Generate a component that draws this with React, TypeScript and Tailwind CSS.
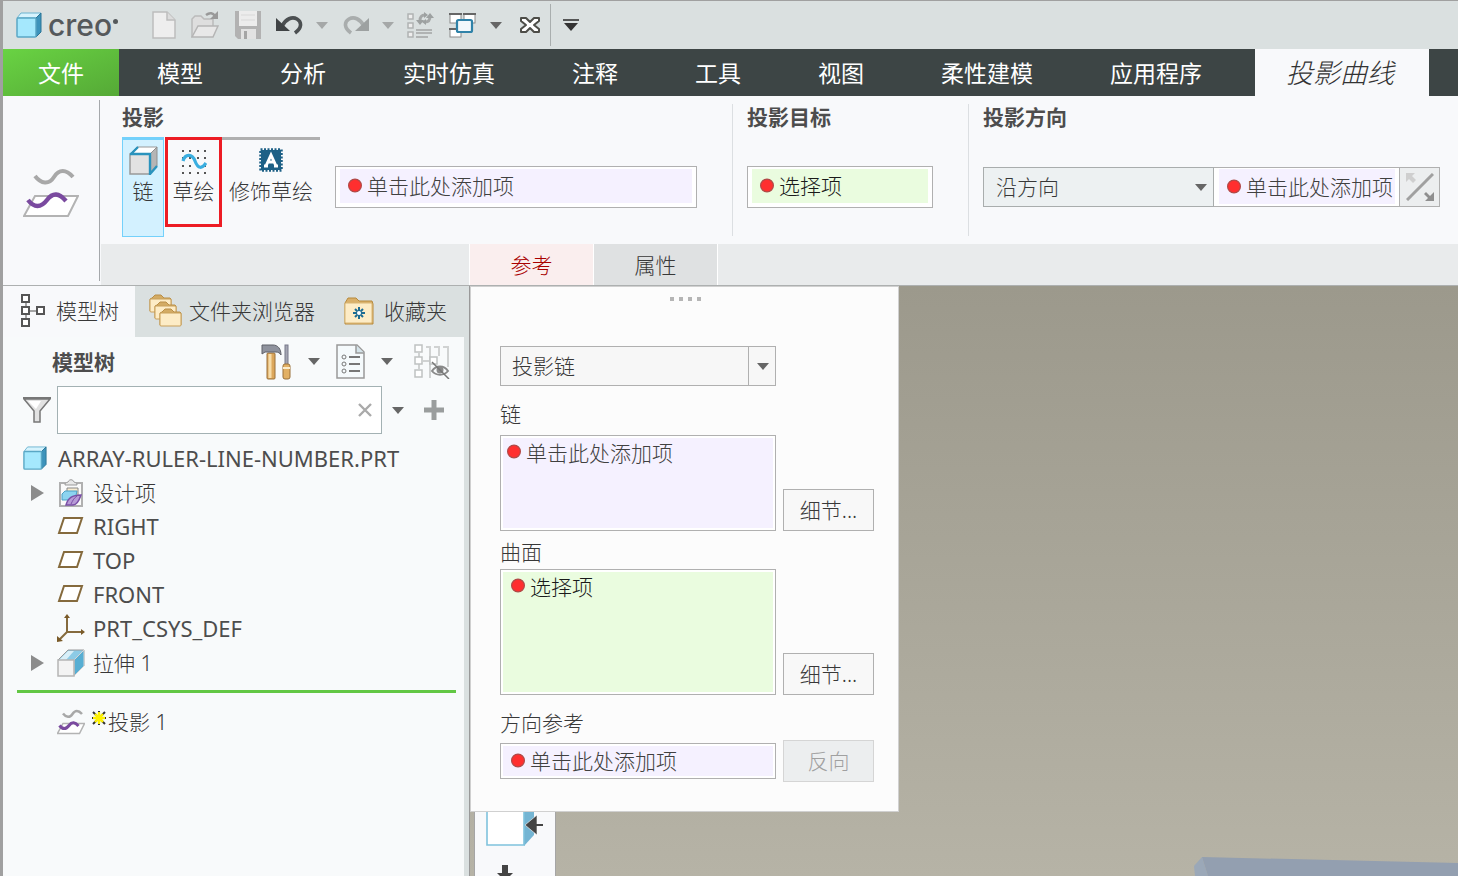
import { useState, type ReactNode } from 'react'
import { clsx } from 'clsx'

/* ---------- icons ---------- */

function Caret({ className = 'text-[#666]' }: { className?: string }) {
  return (
    <svg width="12" height="7" viewBox="0 0 12 7" className={clsx('shrink-0', className)}>
      <path d="M0 0h12L6 7z" fill="currentColor" />
    </svg>
  )
}

function RedDot() {
  return (
    <svg width="14" height="16" viewBox="0 0 14 16" className="shrink-0">
      <circle cx="7" cy="7.5" r="6.4" fill="#ff2f2f" stroke="#b04a48" strokeWidth="1.2" />
    </svg>
  )
}

function PartCube({ size }: { size: number }) {
  return (
    <svg width={size} height={size} viewBox="0 0 26 26" className="shrink-0">
      <path d="M1 6 5 1h20l-5 5z" fill="#d6f3fd" stroke="#6db4d0" />
      <path d="M20 6l5-5v19l-5 5z" fill="#3d93bb" stroke="#2a7596" />
      <rect x="1" y="6" width="19" height="19" rx="1" fill="#a5e8fd" stroke="#5aa7c5" strokeWidth="1.5" />
    </svg>
  )
}

function NewIcon() {
  return (
    <svg width="24" height="28" viewBox="0 0 24 28">
      <path d="M1 1h14l8 8v18H1z" fill="#eee" stroke="#bdbdbd" strokeWidth="1.5" />
      <path d="M15 1v8h8" fill="#dcdcdc" stroke="#bdbdbd" strokeWidth="1.5" />
    </svg>
  )
}

function OpenIcon() {
  return (
    <svg width="28" height="28" viewBox="0 0 28 28">
      <path d="M1 26V8l3-3h6l3 3h9v7" fill="#dedede" stroke="#bbb" strokeWidth="1.5" />
      <path d="M1 26l6-11h20l-5 11z" fill="#e8e8e8" stroke="#b5b5b5" strokeWidth="1.5" />
      <path d="M15 4c4-3 7-2 9 1" fill="none" stroke="#999" strokeWidth="2.5" />
      <path d="M27 0v8h-8z" fill="#999" />
    </svg>
  )
}

function SaveIcon() {
  return (
    <svg width="26" height="28" viewBox="0 0 26 28">
      <path d="M0 0h26v28H3l-3-3z" fill="#b2b2b2" />
      <rect x="4" y="0" width="18" height="15" fill="#ececec" />
      <path d="M6 18h15v10H6z" fill="#e2e2e2" />
      <rect x="9" y="20" width="3" height="8" fill="#a5a5a5" />
      <path d="M6 4h14M6 9h14" stroke="#d8d8d8" />
    </svg>
  )
}

function UndoIcon() {
  return (
    <svg width="28" height="20" viewBox="0 0 28 20">
      <path d="M6 11C10 4 16 1 21 4c5 3 5 9-2 14" fill="none" stroke="#4b4f51" strokeWidth="3.6" />
      <path d="M0 3l14 13H0z" fill="#3f4345" />
    </svg>
  )
}

function RedoIcon() {
  return (
    <svg width="28" height="20" viewBox="0 0 28 20">
      <path d="M22 11C18 4 12 1 7 4c-5 3-5 9 2 14" fill="none" stroke="#a9adad" strokeWidth="3.6" />
      <path d="M27 3v13H13z" fill="#9da1a1" />
    </svg>
  )
}

function RegenIcon() {
  return (
    <svg width="27" height="27" viewBox="0 0 27 27" fill="none" stroke="#b0b3b3">
      <rect x="1" y="2" width="5" height="5" strokeWidth="1.5" fill="#eee" />
      <rect x="1" y="11" width="5" height="5" strokeWidth="1.5" fill="#eee" />
      <rect x="1" y="20" width="5" height="5" strokeWidth="1.5" fill="#eee" />
      <path d="M9 18h16M9 21h16M9 25h12" strokeWidth="1.8" />
      <path d="M13 9c0-4 1-6 5-6M23 4c0 4-1 6-5 6" strokeWidth="3" stroke="#a4a7a7" />
      <path d="M9 8h8l-4 5zM19 6h8l-4-5zM17 0v6l4-3zM19 7v6l-4-3z" fill="#9da1a1" stroke="none" />
    </svg>
  )
}

function WindowsIcon() {
  return (
    <svg width="27" height="27" viewBox="0 0 27 27">
      <g fill="#fff" stroke="#8a8a8a">
        <rect x="1" y="2" width="11" height="9" />
        <rect x="15" y="2" width="11" height="9" />
        <rect x="1" y="17" width="11" height="8" />
      </g>
      <path d="M0 2h13M14 2h13M0 17h8" stroke="#666" strokeWidth="2" />
      <rect x="8" y="8" width="15" height="12" rx="1.5" fill="#f2f8fb" stroke="#2f82a8" strokeWidth="2.2" />
    </svg>
  )
}

function CloseWindowIcon() {
  return (
    <svg width="20" height="18" viewBox="0 0 20 18" strokeLinejoin="round">
      <path d="M1 2h5l4 4 4-4h5v3l-5 4 5 4v3h-5l-4-4-4 4H1v-3l5-4-5-4z" fill="#fff" stroke="#4d4d48" strokeWidth="2" />
    </svg>
  )
}

function CustomizeIcon() {
  return (
    <svg width="16" height="12" viewBox="0 0 16 12">
      <path d="M0 1h16" stroke="#333" strokeWidth="1.6" />
      <path d="M1 4h14l-7 8z" fill="#333" />
    </svg>
  )
}

function ProjectIcon({ className, small }: { className: string; small?: boolean }) {
  return (
    <svg viewBox="0 0 56 50" className={clsx('shrink-0', className)} fill="none">
      <path d="M12 28h43L45 48H1z" fill="#fff" stroke="#b3b3b3" strokeWidth={small ? 3 : 2} />
      <path d="M12 8c6 8 14 9 19 1s12-8 19 0" stroke="#a8a8a8" strokeWidth={small ? 5 : 4} />
      <path d="M5 32c6 8 13 8 19 0s12-7 19 1" stroke="#7a4a9f" strokeWidth={small ? 6 : 4.4} />
    </svg>
  )
}

function ChainIcon() {
  return (
    <svg width="29" height="29" viewBox="0 0 29 29">
      <path d="M1 8l7-7h20l-6 7z" fill="#fff" stroke="#999" />
      <path d="M21 8l7-7v19l-7 8z" fill="#b5b5b5" stroke="#8f8f8f" />
      <rect x="1" y="8" width="20" height="20" fill="#e2e2e2" stroke="#999" strokeWidth="1.5" />
      <path d="M2 8l7-7M1 8h20v20l7-8" fill="none" stroke="#2a93bd" strokeWidth="2.4" />
    </svg>
  )
}

function SketchIcon() {
  const dots = [1, 8, 16, 23]
  return (
    <svg width="26" height="25" viewBox="0 0 26 25">
      {dots.map((x) => dots.map((y) => (
        <rect key={`${x}-${y}`} x={x} y={y} width="2" height="2" fill="#555" />
      )))}
      <path d="M2 12c2-7 9-8 12 0s7 8 11 2" fill="none" stroke="#3aaee0" strokeWidth="3.2" />
    </svg>
  )
}

function CosmeticIcon() {
  return (
    <svg width="24" height="24" viewBox="0 0 24 24">
      <rect x="2" y="2" width="20" height="20" fill="#1d6086" />
      <rect x="1.5" y="1.5" width="21" height="21" fill="none" stroke="#1d6086" strokeWidth="2.5" strokeDasharray="2 1.5" />
      <path d="M7 18L12 7l5 11M9 14h6M5 18h4M15 18h4" fill="none" stroke="#fff" strokeWidth="3" />
    </svg>
  )
}

function FlipIcon() {
  return (
    <svg width="28" height="28" viewBox="0 0 28 28">
      <path d="M1 27L27 1" stroke="#a0a0a0" strokeWidth="3" />
      <path d="M0 0h9L6 3l4 4-3 3-4-4-3 3z" fill="#cfcfcf" />
      <path d="M28 28h-9l3-3-4-4 2-2 4 4 4-4z" fill="#8f8f8f" />
    </svg>
  )
}

function ModelTreeIcon() {
  return (
    <svg width="24" height="34" viewBox="0 0 24 34" fill="#fff" stroke="#555" strokeWidth="2">
      <path d="M5 8v18M9 17h7" stroke="#888" strokeWidth="1.5" />
      <rect x="1" y="1" width="7" height="7" />
      <rect x="1" y="13" width="7" height="7" />
      <rect x="1" y="25" width="7" height="7" />
      <rect x="16" y="13" width="7" height="7" />
    </svg>
  )
}

function Folder({ x, y }: { x: number; y: number }) {
  return (
    <g transform={`translate(${x} ${y})`}>
      <path d="M1 5l2-1 3-3h6l3 3h6l1 1v12H1z" fill="#d3ab64" stroke="#b98f49" />
      <rect x="1" y="5" width="21" height="13" rx="1" fill="#fdecc6" stroke="#c9a05a" />
    </g>
  )
}

function FoldersIcon() {
  return (
    <svg width="33" height="34" viewBox="0 0 33 34">
      <Folder x={0} y={0} />
      <Folder x={5} y={7} />
      <Folder x={10} y={14} />
    </svg>
  )
}

function FavoritesIcon() {
  return (
    <svg width="30" height="28" viewBox="0 0 30 28">
      <path d="M1 6l3-5h8l3 3h13l1 3v20H1z" fill="#d9b06a" stroke="#b78a3d" />
      <rect x="1" y="6" width="27" height="20" rx="1" fill="#fdecc6" stroke="#d9b674" />
      <path d="M15 10v12M9 16h12M11 12l8 8M19 12l-8 8" stroke="#1d6c93" strokeWidth="2" />
      <circle cx="15" cy="16" r="2" fill="#fff" />
    </svg>
  )
}

function ToolsIcon() {
  return (
    <svg width="30" height="36" viewBox="0 0 30 36">
      <rect x="6" y="9" width="8" height="26" rx="1" fill="#dca75c" stroke="#9a713a" />
      <path d="M9 10v24" stroke="#f6dcaa" strokeWidth="3" />
      <path d="M1 1v9l3-2h11c2 0 4 1 5 3 0-6-3-10-8-10z" fill="#8f929d" stroke="#5f6068" />
      <rect x="24" y="1" width="3" height="20" fill="#a5a6b3" stroke="#77788a" />
      <rect x="22" y="20" width="7" height="15" rx="2" fill="#e2b064" stroke="#9a713a" />
      <path d="M22 24h7" stroke="#fbeccb" strokeWidth="2" />
    </svg>
  )
}

function SettingsListIcon() {
  return (
    <svg width="29" height="35" viewBox="0 0 29 35" fill="none" stroke="#777">
      <path d="M1 1h20l7 7v26H1z" fill="#f5fafc" stroke="#999" strokeWidth="1.5" />
      <path d="M20 1v8h8" fill="#d5e4ea" stroke="#999" strokeWidth="1.5" />
      <circle cx="8" cy="13" r="2" /><circle cx="8" cy="20" r="2" /><circle cx="8" cy="27" r="2" />
      <path d="M13 13h11M13 20h11M13 27h11" strokeWidth="2" />
    </svg>
  )
}

function TreeHiddenIcon() {
  return (
    <svg width="36" height="35" viewBox="0 0 36 35" fill="none" stroke="#bfc2c2" strokeWidth="1.5">
      <path d="M12 3h4v31M20 3h5v9M29 3h5v20M5 9v16M9 17h7" stroke="#d0d2d2" strokeWidth="2" />
      <rect x="1" y="1" width="7" height="7" fill="#fff" />
      <rect x="1" y="13" width="7" height="7" fill="#fff" />
      <rect x="1" y="26" width="7" height="7" fill="#fff" />
      <rect x="16" y="13" width="7" height="7" fill="#fff" />
      <path d="M18 27c4-6 12-6 16 0-4 5-12 5-16 0z" stroke="#8a8a8a" strokeWidth="2" />
      <circle cx="26" cy="26" r="3.5" fill="#8a8a8a" stroke="none" />
      <path d="M18 18l17 17" stroke="#777" />
    </svg>
  )
}

function FilterIcon() {
  return (
    <svg width="28" height="26" viewBox="0 0 28 26">
      <path d="M1 2h26L17 14v11h-6V14z" fill="#e2e2e2" stroke="#777" strokeWidth="1.5" />
      <path d="M0 1h28" stroke="#777" strokeWidth="2" />
      <path d="M5 4h13l-5 8z" fill="#fff" />
    </svg>
  )
}

function ClearIcon() {
  return (
    <svg width="14" height="14" viewBox="0 0 14 14">
      <path d="M1 1l12 12M13 1L1 13" stroke="#aaa" strokeWidth="2.4" />
    </svg>
  )
}

function PlusIcon() {
  return (
    <svg width="20" height="20" viewBox="0 0 20 20">
      <path d="M10 0v20M0 10h20" stroke="#9a9d9d" strokeWidth="5" />
    </svg>
  )
}

function DesignItemsIcon() {
  return (
    <svg width="28" height="30" viewBox="0 0 28 30">
      <rect x="3" y="5" width="22" height="23" fill="#fafafa" stroke="#b0b0b0" strokeWidth="2" />
      <path d="M8 7c0-3 2-2 3-3 1-3 5-3 6 0 1 1 3 0 3 3z" fill="#e8e8e8" stroke="#999" />
      <path d="M10 10h11v8H10z" fill="#f8ecd0" stroke="#888" />
      <path d="M5 16l3-3h12l-2 9H5z" fill="#8cd4f0" stroke="#4ba0c4" />
      <path d="M9 27c2-7 6-10 15-10-2 6-4 10-8 10z" fill="#b79bd6" stroke="#7a4fa6" strokeWidth="1.5" />
      <path d="M14 26c2-4 3-6 6-8" fill="none" stroke="#7a4fa6" />
    </svg>
  )
}

function PlaneIcon() {
  return (
    <svg width="28" height="18" viewBox="0 0 28 18">
      <path d="M7 1h18l-5 15H2z" fill="#fff" stroke="#856a3d" strokeWidth="2" />
    </svg>
  )
}

function CsysIcon() {
  return (
    <svg width="28" height="28" viewBox="0 0 28 28" fill="none" stroke="#856a3d" strokeWidth="2">
      <path d="M10 3v15h15M10 18l-8 8" />
      <path d="M10 0l3 4H7zM28 18l-4 3v-6zM0 28v-6l6 5z" fill="#7a5a28" stroke="none" />
    </svg>
  )
}

function ExtrudeIcon() {
  return (
    <svg width="28" height="28" viewBox="0 0 28 28">
      <path d="M1 11L11 1h16v16L17 27z" fill="#8ccbe6" stroke="#9a9a9a" />
      <path d="M17 11L27 1v16L17 27z" fill="#57aed3" stroke="#d5d5d5" />
      <path d="M2 11L11 2h6l-8 9z" fill="#d9eff8" />
      <rect x="1" y="11" width="16" height="16" fill="#f3f3f3" stroke="#b5b5b5" strokeWidth="1.5" />
    </svg>
  )
}

function NewStar() {
  return (
    <svg width="14" height="14" viewBox="0 0 14 14" className="mb-2 shrink-0">
      <path d="M1 1l12 12M13 1L1 13M7 0v14M0 7h14" stroke="#333" strokeWidth="2" />
      <path d="M7 1v12M1 7h12M3 3l8 8M11 3l-8 8" stroke="#fff200" strokeWidth="2.4" />
    </svg>
  )
}

/* ---------- controls ---------- */

type Tone = 'idle' | 'active'

interface CollectorProps {
  label: string
  value: string
  tone?: Tone
  className?: string
  pad?: string
}

const toneBg: Record<Tone, string> = {
  idle: 'bg-[#f5f1ff] text-[#404040]',
  active: 'bg-[#eafcdf] text-[#1a1a1a]',
}

function Collector({ label, value, tone = 'idle', className, pad = 'p-[2px]' }: CollectorProps) {
  return (
    <label className={clsx('flex border border-[#b0b0b0] bg-white', pad, className)}>
      <span className={clsx('flex min-w-0 flex-1 items-center gap-[5px] pl-2', toneBg[tone])}>
        <RedDot />
        <input readOnly aria-label={label} defaultValue={value} className="w-full min-w-0 bg-transparent leading-7 outline-none" />
      </span>
    </label>
  )
}

function ListCollector({ label, value, tone = 'idle', pad }: CollectorProps) {
  return (
    <label className="flex h-full min-w-0 flex-1 border border-[#b0b0b0] bg-white p-[2px]">
      <span className={clsx('flex min-w-0 flex-1 gap-[5px]', toneBg[tone], pad)}>
        <span className="pt-[6px]"><RedDot /></span>
        <textarea readOnly aria-label={label} defaultValue={value} className="min-w-0 flex-1 resize-none bg-transparent pt-px leading-7 outline-none" />
      </span>
    </label>
  )
}

function PanelButton({ children, disabled }: { children: ReactNode; disabled?: boolean }) {
  return (
    <button disabled={disabled}
      className={clsx('h-[42px] w-[91px] shrink-0 border',
        disabled ? 'border-[#d5d5d5] bg-[#eceeef] text-[#a0a0a0]' : 'border-[#b0b0b0] bg-[#f8f8f8]')}>
      {children}
    </button>
  )
}

/* ---------- sections ---------- */

function QuickAccess() {
  return (
    <header className="flex h-12 items-center bg-[#dae0e0]">
      <div className="flex w-[149px] items-center gap-[6px] pl-[13px]">
        <PartCube size={26} />
        <span className="flex items-center font-['Inter',sans-serif] text-[30px] leading-8 font-medium text-[#55595b]">
          creo
          <span className="mb-2 ml-px size-[5px] rounded-full bg-[#55595b]" />
        </span>
      </div>
      <button aria-label="新建"><NewIcon /></button>
      <button aria-label="打开" className="ml-[15px]"><OpenIcon /></button>
      <button aria-label="保存" className="ml-4"><SaveIcon /></button>
      <button aria-label="撤消" className="ml-[15px]"><UndoIcon /></button>
      <button aria-label="撤消列表" className="ml-3"><Caret className="text-[#a5a8a8]" /></button>
      <button aria-label="重做" className="ml-[14px]"><RedoIcon /></button>
      <button aria-label="重做列表" className="ml-3"><Caret className="text-[#a5a8a8]" /></button>
      <button aria-label="重新生成" className="ml-[13px]"><RegenIcon /></button>
      <button aria-label="窗口" className="ml-[15px]"><WindowsIcon /></button>
      <button aria-label="窗口列表" className="ml-[14px]"><Caret /></button>
      <button aria-label="关闭" className="ml-[18px]"><CloseWindowIcon /></button>
      <div className="ml-[10px] h-[42px] w-px bg-[#a9aeae]" />
      <button aria-label="自定义" className="ml-3"><CustomizeIcon /></button>
    </header>
  )
}

const menuTabs = ['模型', '分析', '实时仿真', '注释', '工具', '视图', '柔性建模', '应用程序']

function MenuTabs() {
  return (
    <nav className="flex h-[47px] bg-[#3d4545] text-[23px] font-normal whitespace-nowrap text-white">
      <button className="w-[116px] shrink-0 bg-linear-to-br from-[#69d343] to-[#55a936] pt-px">文件</button>
      <div className="flex gap-px">
        {menuTabs.map((tab) => (
          <button key={tab} className="px-[38px]">{tab}</button>
        ))}
      </div>
      <button className="ml-[15px] w-[174px] shrink-0 bg-[#f8f9fb] pt-px pr-1 text-[27px] font-light text-[#333] italic">投影曲线</button>
    </nav>
  )
}

function RibbonGroup({ title, className, children }: { title: string; className?: string; children: ReactNode }) {
  return (
    <section className={clsx('pr-[35px] pl-[14px]', className)}>
      <h2 className="h-[33px] leading-[26px] font-bold text-[#4d4d4d]">{title}</h2>
      {children}
    </section>
  )
}

function Ribbon() {
  const [direction, setDirection] = useState('沿方向')
  return (
    <div className="flex border-b border-[#adb0b0] bg-[#f8f9fb]">
      <div className="flex w-24 shrink-0 items-center justify-center pt-1">
        <ProjectIcon className="h-[50px] w-14" />
      </div>
      <div className="mt-1 mb-1 w-px shrink-0 bg-[#a5a8ab]" />
      <div className="min-w-0 flex-1 pl-px">
        <div className="flex h-[148px] pt-2 pb-2">
          <RibbonGroup title="投影" className="pl-[21px]">
            <div className="flex items-start">
              <button className="flex h-[100px] w-[42px] flex-col items-center border border-t-3 border-[#74d1fb] bg-[#d3f1ff] pt-[6px]">
                <ChainIcon />
                <span className="leading-8">链</span>
              </button>
              <button className="ml-px flex h-[90px] w-[57px] flex-col items-center border-3 border-[#ed1c24] pt-[9px] whitespace-nowrap">
                <SketchIcon />
                <span className="mt-px leading-8">草绘</span>
              </button>
              <button className="flex h-[90px] w-[98px] flex-col items-center border-t-3 border-[#b0b0b0] pt-2 whitespace-nowrap">
                <CosmeticIcon />
                <span className="mt-[3px] leading-8">修饰草绘</span>
              </button>
              <Collector label="投影" value="单击此处添加项" className="mt-[29px] ml-[15px] h-[42px] w-[362px]" pad="px-1 pt-[2px] pb-1" />
            </div>
          </RibbonGroup>
          <RibbonGroup title="投影目标" className="border-l border-[#dcdfe2]">
            <Collector label="投影目标" value="选择项" tone="active" className="mt-[29px] h-[42px] w-[186px]" pad="px-1 pt-[2px] pb-1" />
          </RibbonGroup>
          <RibbonGroup title="投影方向" className="border-l border-[#dcdfe2]">
            <div className="mt-[30px] flex h-10">
              <div className="relative w-[231px]">
                <select aria-label="投影方向" value={direction} onChange={(e) => setDirection(e.target.value)}
                  className="h-full w-full appearance-none border border-[#a9adad] bg-[#edf1f2] px-3 outline-none">
                  <option>沿方向</option>
                  <option>垂直于曲面</option>
                </select>
                <Caret className="pointer-events-none absolute top-[17px] right-[7px] text-[#666]" />
              </div>
              <Collector label="方向参考" value="单击此处添加项" className="w-[186px] border-l-0" pad="pt-px pb-[2px] pl-[5px] pr-1" />
              <button aria-label="反向" className="flex w-10 items-center justify-center border border-l-0 border-[#b0b0b0] bg-[#eceeef]">
                <FlipIcon />
              </button>
            </div>
          </RibbonGroup>
        </div>
        <div className="flex h-[41px] bg-[#e9ebec] pl-[368px]">
          <button className="w-[125px] border-x border-white bg-[#faeeee] text-[#a80000]">参考</button>
          <button className="w-[124px] border-r border-white bg-[#dfe1e2]">属性</button>
        </div>
      </div>
    </div>
  )
}

interface TreeNode {
  name: string
  icon: ReactNode
  expandable?: boolean
}

const treeNodes: TreeNode[] = [
  { name: '设计项', icon: <DesignItemsIcon />, expandable: true },
  { name: 'RIGHT', icon: <PlaneIcon /> },
  { name: 'TOP', icon: <PlaneIcon /> },
  { name: 'FRONT', icon: <PlaneIcon /> },
  { name: 'PRT_CSYS_DEF', icon: <CsysIcon /> },
  { name: '拉伸 1', icon: <ExtrudeIcon />, expandable: true },
]

function ModelTree() {
  const [query, setQuery] = useState('')
  return (
    <aside className="flex w-[467px] shrink-0 flex-col border-r border-[#999] bg-[#dae0e0] pr-[5px]">
      <nav className="flex h-[51px] items-stretch pb-px whitespace-nowrap">
        <button className="-mb-px flex w-[132px] items-center gap-[11px] bg-[#f8f9fb] pb-px pl-[18px]">
          <ModelTreeIcon />模型树
        </button>
        <button className="flex items-center gap-[7px] pl-[14px]"><FoldersIcon />文件夹浏览器</button>
        <button className="flex items-center gap-[10px] pl-[29px]"><FavoritesIcon />收藏夹</button>
      </nav>
      <div className="flex-1 bg-[#f8fafb]">
        <div className="flex h-[49px] items-center pl-[49px]">
          <h2 className="w-[209px] font-bold text-[#4d4d4d]">模型树</h2>
          <button aria-label="工具"><ToolsIcon /></button>
          <button aria-label="工具列表" className="ml-[17px]"><Caret /></button>
          <button aria-label="设置" className="ml-4"><SettingsListIcon /></button>
          <button aria-label="设置列表" className="ml-4"><Caret /></button>
          <button aria-label="隐藏树列" className="ml-[21px]"><TreeHiddenIcon /></button>
        </div>
        <div className="flex items-center pl-5">
          <FilterIcon />
          <div className="ml-[6px] flex h-12 w-[325px] items-center border border-[#a3b1b3] bg-white pr-[9px]">
            <input aria-label="搜索" value={query} onChange={(e) => setQuery(e.target.value)} className="min-w-0 flex-1 px-2 outline-none" />
            <button aria-label="清除" onClick={() => setQuery('')}><ClearIcon /></button>
          </div>
          <button aria-label="搜索选项" className="ml-[10px]"><Caret /></button>
          <button aria-label="添加" className="ml-5"><PlusIcon /></button>
        </div>
        <ul className="pt-2">
          <li className="flex h-[34px] items-center gap-[11px] pb-[2px] pl-5 text-[22px] font-normal text-[#4d4d4d]">
            <PartCube size={24} />ARRAY-RULER-LINE-NUMBER.PRT
          </li>
          {treeNodes.map((node) => (
            <li key={node.name}
              className={clsx('flex h-[34px] items-center pl-7', !node.expandable && 'pb-[2px] text-[22px] font-normal text-[#4d4d4d]')}>
              <span className="w-[26px]">
                {node.expandable && (
                  <svg width="13" height="16" viewBox="0 0 13 16"><path d="M0 0l13 8-13 8z" fill="#8c8c8c" /></svg>
                )}
              </span>
              <span className="w-9">{node.icon}</span>
              {node.name}
            </li>
          ))}
        </ul>
        <div className="mt-[10px] mr-2 ml-[14px] h-[3px] bg-[#62c744]" />
        <div className="mt-3 flex h-[34px] items-center pl-[54px]">
          <ProjectIcon className="mr-[7px] h-[26px] w-7" small />
          <NewStar />
          <span className="ml-[2px]">投影 1</span>
        </div>
      </div>
    </aside>
  )
}

function ReferencesPanel() {
  const [mode, setMode] = useState('投影链')
  return (
    <div className="absolute top-0 left-0 w-[429px] border border-[#d0d0d0] bg-[#fcfcfc] pt-[10px] pr-6 pb-[29px] pl-[29px]">
      <div className="flex justify-center gap-[5px] pr-[3px]">
        {[0, 1, 2, 3].map((i) => <span key={i} className="size-1 bg-[#b5b5b5]" />)}
      </div>
      <div className="relative mt-[45px] h-10 w-[276px]">
        <select aria-label="类型" value={mode} onChange={(e) => setMode(e.target.value)}
          className="h-full w-full appearance-none border border-[#b0b0b0] bg-[#f7f7f7] px-[11px] outline-none">
          <option>投影链</option>
          <option>投影草绘</option>
        </select>
        <span className="pointer-events-none absolute inset-y-0 right-0 flex w-7 items-center justify-center border-l border-[#b0b0b0]">
          <Caret />
        </span>
      </div>
      <h3 className="mt-[14px] mb-[7px] leading-7">链</h3>
      <div className="flex h-24 items-end gap-[7px]">
        <ListCollector label="链" value="单击此处添加项" pad="pl-1" />
        <PanelButton>细节...</PanelButton>
      </div>
      <h3 className="mt-[7px] mb-[3px] leading-7">曲面</h3>
      <div className="flex h-[126px] items-end gap-[7px]">
        <ListCollector label="曲面" value="选择项" tone="active" pad="pl-2" />
        <PanelButton>细节...</PanelButton>
      </div>
      <h3 className="mt-[14px] mb-[3px] leading-7">方向参考</h3>
      <div className="flex items-center gap-[7px]">
        <Collector label="方向参考" value="单击此处添加项" className="h-9 min-w-0 flex-1" />
        <PanelButton disabled>反向</PanelButton>
      </div>
    </div>
  )
}

function Viewport() {
  return (
    <main className="relative min-w-0 flex-1 overflow-hidden bg-linear-to-b from-[#9c998c] to-[#b6b3a6]">
      <svg className="absolute right-0 bottom-0" width="264" height="19" viewBox="0 0 264 19">
        <path d="M0 9l8-9 6 19H1z" fill="#9ba8b8" />
        <path d="M8 0l256 6v13H14z" fill="#939fb0" />
      </svg>
      <div className="absolute inset-y-0 left-1 flex w-[82px] flex-col justify-end border-x border-[#a5a5a5] bg-[#f8f9fb]">
        <svg width="80" height="66" viewBox="0 0 80 66">
          <path d="M48 0h11v25L49 36z" fill="#74b5d3" />
          <path d="M12 0v35h37V0z" fill="#fff" stroke="#7fc2dd" strokeWidth="1.6" />
          <path d="M50 15l12-10v20z" fill="#444" stroke="#fff" strokeWidth=".6" />
          <path d="M60 15h8" stroke="#444" strokeWidth="2" />
          <path d="M30 55v11" stroke="#444" strokeWidth="6" />
          <path d="M22 63h16l-3 3H25z" fill="#444" />
        </svg>
      </div>
      <ReferencesPanel />
    </main>
  )
}

export default function App() {
  return (
    <div className="flex min-h-screen flex-col border-t border-l-3 border-[#a0a0a0] bg-[#f8f9fb] font-['Noto_Sans','Noto_Sans_CJK_SC',sans-serif] text-[21px] leading-7 font-light text-[#383838]">
      <QuickAccess />
      <MenuTabs />
      <Ribbon />
      <div className="flex flex-1">
        <ModelTree />
        <Viewport />
      </div>
    </div>
  )
}
